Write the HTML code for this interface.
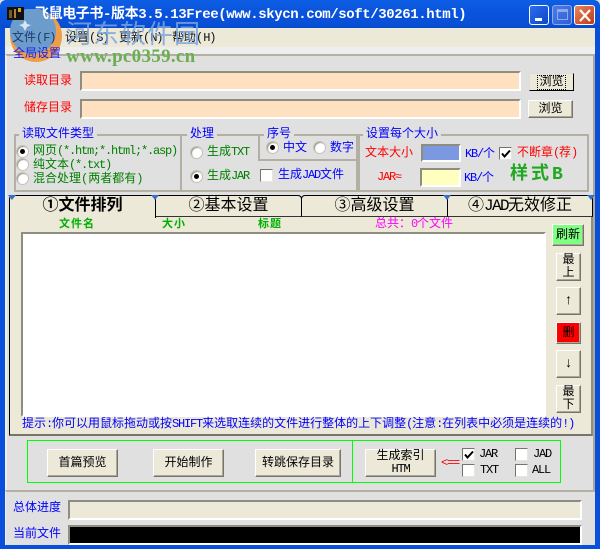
<!DOCTYPE html>
<html><head><meta charset="utf-8">
<style>
html,body{margin:0;padding:0;width:600px;height:549px;overflow:hidden;background:#e0e0e0}
*{box-sizing:border-box}
body{position:relative;font-family:"Liberation Mono","WenQuanYi Zen Hei","Noto Sans CJK SC",monospace;font-size:12px}
i{font-style:normal;letter-spacing:-1.2px}
.a{position:absolute}
.t{position:absolute;white-space:nowrap;line-height:14px}
.btn{position:absolute;background:#ece9d8;border:1px solid;border-color:#fff #77746a #77746a #fff;box-shadow:inset -1px -1px 0 #aca899;display:flex;align-items:center;justify-content:center;text-align:center;line-height:14px;color:#000;white-space:nowrap}
.inp{position:absolute;border:2px solid;border-color:#8f8c80 #fff #fff #8f8c80}
.grp{position:absolute;border:2px solid #b3b0a3}
.lg{position:absolute;background:#e0e0e0;padding:0 3px;line-height:14px;color:#0000ff;white-space:nowrap}
.r{position:absolute;width:13px;height:13px;border-radius:50%;background:#fff;border:1px solid #c4c1b4;box-shadow:inset 1px 1px 1px #9a978a}
.r.on:after{content:"";position:absolute;left:3px;top:3px;width:5px;height:5px;border-radius:50%;background:#000}
.c{position:absolute;width:13px;height:13px;background:#fff;border:1px solid;border-color:#77746a #e8e6da #e8e6da #77746a}
.c svg{position:absolute;left:1px;top:1px}
.tab{position:absolute;height:21px;background:#ece9d8;border:1px solid #000;border-bottom:0;border-radius:4px 4px 0 0;text-align:center;font-size:16px;line-height:21px;white-space:nowrap;overflow:hidden}
.tri{position:absolute;width:0;height:0;border-left:4px solid transparent;border-right:4px solid transparent;border-top:5px solid #3a6ec8;z-index:3}
</style></head><body>
<!-- window frame -->
<div class="a" style="left:0;top:0;width:600px;height:28px;background:linear-gradient(#0a5fe8 0,#0d5ce0 3px,#0852dd 14px,#0a50d6 24px,#0349c9 28px);border-radius:6px 6px 0 0"></div>
<div class="a" style="left:0;top:28px;width:5px;height:521px;background:#0a4fdc"></div>
<div class="a" style="left:595px;top:28px;width:5px;height:521px;background:#0a4fdc"></div>
<div class="a" style="left:0;top:545px;width:600px;height:4px;background:#0a4fdc"></div>
<!-- window buttons -->
<div class="a" style="left:529px;top:5px;width:20px;height:20px;border:1px solid #fff;border-radius:3px;background:linear-gradient(135deg,#2a6cf0,#0f46c8)"><div class="a" style="left:5px;top:12px;width:7px;height:3px;background:#fff"></div></div>
<div class="a" style="left:552px;top:5px;width:20px;height:20px;border:1px solid #8fa8ea;border-radius:3px;background:linear-gradient(135deg,#4a7ce8,#2f5fd4)"><div class="a" style="left:4px;top:3px;width:11px;height:11px;border:1px solid #8fa8ea;border-top-width:3px"></div></div>
<div class="a" style="left:574px;top:5px;width:21px;height:20px;border:1px solid #fff;border-radius:3px;background:linear-gradient(135deg,#e8835f,#c23a12)"><svg class="a" style="left:3px;top:3px" width="14" height="13"><path d="M2 1L12 12M12 1L2 12" stroke="#fff" stroke-width="2.2" fill="none"/></svg></div>
<!-- menu -->
<div class="a" style="left:5px;top:28px;width:590px;height:19px;background:#ece9d8"></div>
<div class="t" style="left:65px;top:31px;color:#111">设置(<i>S</i>)</div>
<div class="t" style="left:119px;top:31px;color:#111">更新(<i>N</i>)</div>
<div class="t" style="left:172px;top:31px;color:#111">帮助(<i>H</i>)</div>
<!-- main panel -->
<div class="a" style="left:5px;top:47px;width:590px;height:7px;background:#eeeeee"></div>
<div class="a" style="left:5px;top:54px;width:590px;height:437px;background:#e0e0e0;border-top:2px solid #b3b0a3;border-left:2px solid #eee;border-right:2px solid #aca899"></div>
<!-- watermark -->
<svg class="a" style="left:8px;top:9px" width="56" height="56"><circle cx="28" cy="27" r="26" fill="#ee9d4a"/><circle cx="25" cy="22" r="23" fill="#6c9ccc"/><path d="M15 15l2-4 2 4 4 1-4 2-2 4-2-4-4-2z" fill="#d8e6f2"/></svg>
<!-- icon + title above logo -->
<svg class="a" style="left:7px;top:7px" width="17" height="13"><rect width="17" height="13" fill="#111"/><rect x="2" y="3" width="3" height="8" fill="#7a5a20"/><rect x="7" y="2" width="2" height="9" fill="#b08030"/><rect x="11" y="1" width="3" height="4" fill="#e0a020"/></svg>
<div class="t" style="left:35px;top:8px;color:#fff;font-size:14px;font-weight:bold;letter-spacing:-.4px">飞鼠电子书-版本3.5.13Free(www.skycn.com/soft/30261.html)</div>
<div class="t" style="left:12px;top:31px;color:#1a3a6a">文件(<i>F</i>)</div>
<div class="t" style="left:13px;top:47px;color:#1a1aee">全局设置</div>
<div class="t" style="left:66px;top:20px;font-size:26px;line-height:28px;color:#7aa5e0;opacity:.85;font-family:'WenQuanYi Zen Hei',sans-serif;letter-spacing:1px">河东软件园</div>
<div class="t" style="left:66px;top:47px;font:bold 19px/20px 'Liberation Serif',serif;color:#6cae52;letter-spacing:.3px">www.pc0359.cn</div>
<!-- directories -->
<div class="t" style="left:24px;top:74px;color:#f00;font-size:12px">读取目录</div>
<div class="t" style="left:24px;top:101px;color:#f00;font-size:12px">储存目录</div>
<div class="inp" style="left:80px;top:71px;width:441px;height:20px;background:#ffe0c0"></div>
<div class="inp" style="left:80px;top:99px;width:441px;height:20px;background:#ffe0c0"></div>
<div class="a" style="left:529px;top:73px;width:45px;height:18px;background:#ece9d8;border:1px solid #000;border-color:#ddd #000 #000 #ddd;display:flex;align-items:center;justify-content:center"><span style="outline:1px dotted #000;padding:0 1px;line-height:13px">浏览</span></div>
<div class="btn" style="left:528px;top:100px;width:45px;height:18px">浏览</div>
<!-- groups -->
<div class="grp" style="left:14px;top:134px;width:168px;height:58px"></div>
<div class="lg" style="left:19px;top:127px">读取文件类型</div>
<div class="r on" style="left:16px;top:145px"></div>
<div class="r" style="left:16px;top:158px"></div>
<div class="r" style="left:16px;top:172px"></div>
<div class="t" style="left:33px;top:144px;color:#008000;font-size:12px">网页<i>(*.htm;*.html;*.asp)</i></div>
<div class="t" style="left:33px;top:158px;color:#008000">纯文本<i>(*.txt)</i></div>
<div class="t" style="left:33px;top:172px;color:#008000">混合处理(两者都有)</div>

<div class="grp" style="left:180px;top:134px;width:178px;height:58px"></div>
<div class="lg" style="left:187px;top:127px">处理</div>
<div class="r" style="left:190px;top:146px"></div>
<div class="r on" style="left:190px;top:170px"></div>
<div class="t" style="left:207px;top:145px;color:#008000">生成<i>TXT</i></div>
<div class="t" style="left:207px;top:169px;color:#008000">生成<i>JAR</i></div>
<div class="a" style="left:258px;top:134px;width:100px;height:27px;border:2px solid #b3b0a3;background:#e0e0e0"></div>
<div class="lg" style="left:264px;top:127px">序号</div>
<div class="r on" style="left:266px;top:141px"></div>
<div class="t" style="left:283px;top:141px;color:#0000ff">中文</div>
<div class="r" style="left:313px;top:141px"></div>
<div class="t" style="left:330px;top:141px;color:#0000ff">数字</div>
<div class="c" style="left:260px;top:169px"></div>
<div class="t" style="left:278px;top:168px;color:#0000ff">生成<i>JAD</i>文件</div>

<div class="grp" style="left:358px;top:134px;width:231px;height:58px"></div>
<div class="lg" style="left:363px;top:127px">设置每个大小</div>
<div class="t" style="left:365px;top:146px;color:#f00">文本大小</div>
<div class="inp" style="left:421px;top:144px;width:40px;height:18px;background:#7b98e0"></div>
<div class="t" style="left:465px;top:147px;color:#0000ff"><i>KB/</i>个</div>
<div class="c" style="left:499px;top:147px"><svg width="10" height="10"><path d="M1 4.5L3.5 7.5L9 1.5" stroke="#000" stroke-width="2" fill="none"/></svg></div>
<div class="t" style="left:517px;top:146px;color:#f00">不断章<i>(</i>荐<i>)</i></div>
<div class="t" style="left:377px;top:170px;color:#f00"><i>JAR≈</i></div>
<div class="inp" style="left:420px;top:168px;width:41px;height:19px;background:#ffffc0"></div>
<div class="t" style="left:464px;top:171px;color:#0000ff"><i>KB/</i>个</div>
<div class="t" style="left:510px;top:165px;font-size:18px;line-height:20px;color:#20a820;font-weight:bold;letter-spacing:3px">样式B</div>
<!-- tab content -->
<div class="a" style="left:9px;top:214px;width:584px;height:222px;background:#ece9d8;border:1px solid #000;border-color:#000 #8f8c80 #77746a #000;border-top:0;border-bottom-width:2px;border-right-width:2px"></div>
<div class="tab" style="left:155px;top:195px;width:147px;height:22px;border-bottom:1px solid #333">②基本设置</div>
<div class="tab" style="left:301px;top:195px;width:147px;height:22px;border-bottom:1px solid #333">③高级设置</div>
<div class="tab" style="left:447px;top:195px;width:146px;height:22px;border-bottom:1px solid #333">④<span style="letter-spacing:-1.6px">JAD</span>无效修正</div>
<div class="tab" style="left:9px;top:195px;width:147px;height:23px;border-bottom:0;font-weight:bold;z-index:2">①文件排列</div>
<div class="tri" style="left:8px;top:195px"></div>
<div class="tri" style="left:151px;top:195px"></div>
<div class="tri" style="left:443px;top:195px"></div>
<div class="tri" style="left:587px;top:195px"></div>
<div class="t" style="left:59px;top:218px;color:#00b000;font-size:11px;font-weight:bold;letter-spacing:1px;z-index:3">文件名</div>
<div class="t" style="left:162px;top:218px;color:#00b000;font-size:11px;font-weight:bold;letter-spacing:1px">大小</div>
<div class="t" style="left:258px;top:218px;color:#00b000;font-size:11px;font-weight:bold;letter-spacing:1px">标题</div>
<div class="t" style="left:375px;top:217px;color:#ff00ff">总共：<i>0</i>个文件</div>
<div class="inp" style="left:21px;top:232px;width:525px;height:185px;background:#fff;border-color:#8f8c80 #fff #fff #8f8c80"></div>
<div class="btn" style="left:552px;top:224px;width:32px;height:22px;background:#80ff80">刷新</div>
<div class="btn" style="left:556px;top:253px;width:25px;height:28px;line-height:13px"><span>最<br>上</span></div>
<div class="btn" style="left:556px;top:287px;width:25px;height:28px;font-size:14px">↑</div>
<div class="btn" style="left:556px;top:322px;width:25px;height:22px;background:#ff0000">删</div>
<div class="btn" style="left:556px;top:350px;width:25px;height:28px;font-size:14px">↓</div>
<div class="btn" style="left:556px;top:385px;width:25px;height:28px;line-height:13px"><span>最<br>下</span></div>
<div class="t" style="left:22px;top:417px;color:#0000ff;font-size:12px">提示<i>:</i>你可以用鼠标拖动或按<i>SHIFT</i>来选取连续的文件进行整体的上下调整<i>(</i>注意<i>:</i>在列表中必须是连续的<i>!)</i></div>
<!-- bottom box -->
<div class="a" style="left:27px;top:440px;width:534px;height:43px;border:1px solid #00ff00"></div>
<div class="a" style="left:352px;top:440px;width:1px;height:43px;background:#00ff00"></div>
<div class="btn" style="left:47px;top:449px;width:71px;height:28px">首篇预览</div>
<div class="btn" style="left:153px;top:449px;width:71px;height:28px">开始制作</div>
<div class="btn" style="left:255px;top:449px;width:86px;height:28px">转跳保存目录</div>
<div class="btn" style="left:365px;top:449px;width:71px;height:28px;line-height:13px"><span>生成索引<br><i>HTM</i></span></div>
<div class="t" style="left:441px;top:456px;color:#f00"><i>&lt;==</i></div>
<div class="c" style="left:462px;top:448px"><svg width="10" height="10"><path d="M1 4.5L3.5 7.5L9 1.5" stroke="#000" stroke-width="2" fill="none"/></svg></div>
<div class="t" style="left:479px;top:447px"><i>JAR</i></div>
<div class="c" style="left:515px;top:448px"></div>
<div class="t" style="left:533px;top:447px"><i>JAD</i></div>
<div class="c" style="left:462px;top:464px"></div>
<div class="t" style="left:480px;top:463px"><i>TXT</i></div>
<div class="c" style="left:515px;top:464px"></div>
<div class="t" style="left:532px;top:463px"><i>ALL</i></div>
<!-- progress -->
<div class="a" style="left:5px;top:490px;width:590px;height:55px;background:#e0e0e0;border-top:2px solid #b3b0a3;border-left:1px solid #eee"></div>
<div class="t" style="left:13px;top:501px;color:#0000ff">总体进度</div>
<div class="t" style="left:13px;top:527px;color:#0000ff">当前文件</div>
<div class="inp" style="left:68px;top:500px;width:514px;height:20px;background:#ece9d8"></div>
<div class="inp" style="left:68px;top:525px;width:514px;height:20px;background:#000"></div>
</body></html>
